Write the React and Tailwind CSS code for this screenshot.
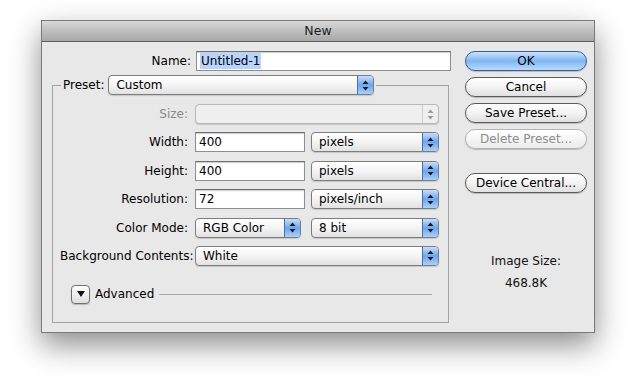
import React from "react";

const font = { fontFamily: '"DejaVu Sans", "Liberation Sans", sans-serif' };

const Arrows = ({ disabled }) => (
  <svg width="7" height="11" viewBox="0 0 7 11">
    <path d="M3.5 0.5 L6.5 4 H0.5 Z" fill={disabled ? "#9a9a9a" : "#1a1a1a"} />
    <path d="M3.5 10.5 L6.5 7 H0.5 Z" fill={disabled ? "#9a9a9a" : "#1a1a1a"} />
  </svg>
);

const Popup = ({ value, className = "", disabled }) => (
  <div
    className={`flex h-[20px] items-stretch rounded-[4px] border ${
      disabled ? "border-[#b8b8b8] bg-[#efefef]" : "border-[#7d7d7d] bg-gradient-to-b from-white via-[#f4f4f4] to-[#e2e2e2]"
    } shadow-[0_1px_1px_rgba(0,0,0,0.15)] ${className}`}
  >
    <span className="flex-1 truncate whitespace-nowrap pl-[7px] text-[12px] leading-[18px] text-black">{value}</span>
    <span
      className={`flex w-[16px] items-center justify-center rounded-r-[3px] border-l ${
        disabled
          ? "border-[#cfcfcf]"
          : "border-[#4a6fb0] bg-gradient-to-b from-[#c6defb] via-[#6aa6ef] to-[#a9d0fb]"
      }`}
    >
      <Arrows disabled={disabled} />
    </span>
  </div>
);

const Field = ({ value, className = "", selected }) => (
  <div
    className={`flex h-[20px] items-center border border-[#8e8e8e] border-t-[#6e6e6e] bg-white pl-[3px] shadow-[inset_0_1px_1px_rgba(0,0,0,0.2)] ${className}`}
  >
    <span className={`text-[12px] leading-[16px] text-black ${selected ? "bg-[#b5d5ff] px-[1px]" : ""}`}>
      {value}
    </span>
  </div>
);

const Button = ({ children, primary, disabled }) => (
  <div
    className={`flex h-[20px] w-[122px] items-center justify-center whitespace-nowrap rounded-full border text-[12px] ${
      primary
        ? "border-[#3c5d95] bg-gradient-to-b from-[#c9e2fc] via-[#7fb6f3] to-[#b7dcfd] text-black"
        : disabled
        ? "border-[#b4b4b4] bg-gradient-to-b from-white to-[#ececec] text-[#8e8e8e]"
        : "border-[#5a5a5a] bg-gradient-to-b from-white via-[#f3f3f3] to-[#e0e0e0] text-black"
    } shadow-[0_1px_1px_rgba(0,0,0,0.2)]`}
  >
    {children}
  </div>
);

const Row = ({ label, children, dim }) => (
  <div className="flex h-[20px] items-center">
    <span
      className={`w-[129px] whitespace-nowrap pr-[1px] text-right text-[12px] ${dim ? "text-[#8a8a8a]" : "text-black"}`}
    >
      {label}
    </span>
    <div className="ml-[6px] flex gap-[6px]">{children}</div>
  </div>
);

export default function App() {
  return (
    <div className="h-[388px] w-[640px] bg-white pl-[41px] pt-[20px]" style={font}>
      <div className="flex h-[313px] w-[554px] flex-col border border-[#7a7a7a] bg-[#e8e8e8] shadow-[0_12px_28px_rgba(0,0,0,0.45)]">
        {/* Title bar */}
        <div className="flex h-[21px] shrink-0 items-center justify-center border-b border-[#5e5e5e] bg-gradient-to-b from-[#d8d8d8] to-[#a7a7a7] text-[12.5px] text-[#1e1e1e]">
          New
        </div>

        <div className="flex flex-1">
          {/* Left side */}
          <div className="w-[415px] pt-[9px]">
            <div className="flex h-[20px] items-center">
              <span className="w-[149px] text-right text-[12px] text-black">Name:</span>
              <Field value="Untitled-1" selected className="ml-[5px] w-[255px]" />
            </div>

            <fieldset className="ml-[10px] mt-[4px] w-[397px] border border-[#a4a4a4] px-[8px] pb-[18px]">
              <legend className="flex items-center px-[2px]">
                <span className="text-[12px] text-black">Preset:</span>
                <Popup value="Custom" className="ml-[4px] w-[266px]" />
              </legend>

              <div className="ml-[-1px] mt-[9px] flex flex-col gap-[8.4px]">
                <Row label="Size:" dim>
                  <Popup value="" disabled className="w-[244px]" />
                </Row>
                <Row label="Width:">
                  <Field value="400" className="w-[110px]" />
                  <Popup value="pixels" className="w-[128px]" />
                </Row>
                <Row label="Height:">
                  <Field value="400" className="w-[110px]" />
                  <Popup value="pixels" className="w-[128px]" />
                </Row>
                <Row label="Resolution:">
                  <Field value="72" className="w-[110px]" />
                  <Popup value="pixels/inch" className="w-[128px]" />
                </Row>
                <Row label="Color Mode:">
                  <Popup value="RGB Color" className="w-[106px]" />
                  <Popup value="8 bit" className="ml-[4px] w-[128px]" />
                </Row>
                <Row label="Background Contents:">
                  <Popup value="White" className="w-[244px]" />
                </Row>
              </div>

              {/* Advanced */}
              <div className="ml-[10px] mt-[19px] flex h-[19px] items-center">
                <div className="flex h-[19px] w-[19px] items-center justify-center rounded-[4px] border border-[#6f6f6f] bg-gradient-to-b from-white to-[#dedede] shadow-[0_1px_1px_rgba(0,0,0,0.2)]">
                  <svg width="8" height="6" viewBox="0 0 8 6">
                    <path d="M0 0 H8 L4 6 Z" fill="#111" />
                  </svg>
                </div>
                <span className="ml-[5px] text-[12px] text-black">Advanced</span>
                <div className="ml-[5px] h-px w-[273px] bg-[#a8a8a8]" />
              </div>
            </fieldset>
          </div>

          {/* Right side */}
          <div className="flex flex-1 flex-col items-start pl-[8px] pt-[9px]">
            <div className="flex flex-col gap-[6px]">
              <Button primary>OK</Button>
              <Button>Cancel</Button>
              <Button>Save Preset...</Button>
              <Button disabled>Delete Preset...</Button>
            </div>
            <div className="mt-[24px]">
              <Button>Device Central...</Button>
            </div>
            <div className="mt-[59px] flex w-[122px] flex-col items-center gap-[4px] text-[12px] text-[#111]">
              <span>Image Size:</span>
              <span>468.8K</span>
            </div>
          </div>
        </div>
      </div>
    </div>
  );
}
